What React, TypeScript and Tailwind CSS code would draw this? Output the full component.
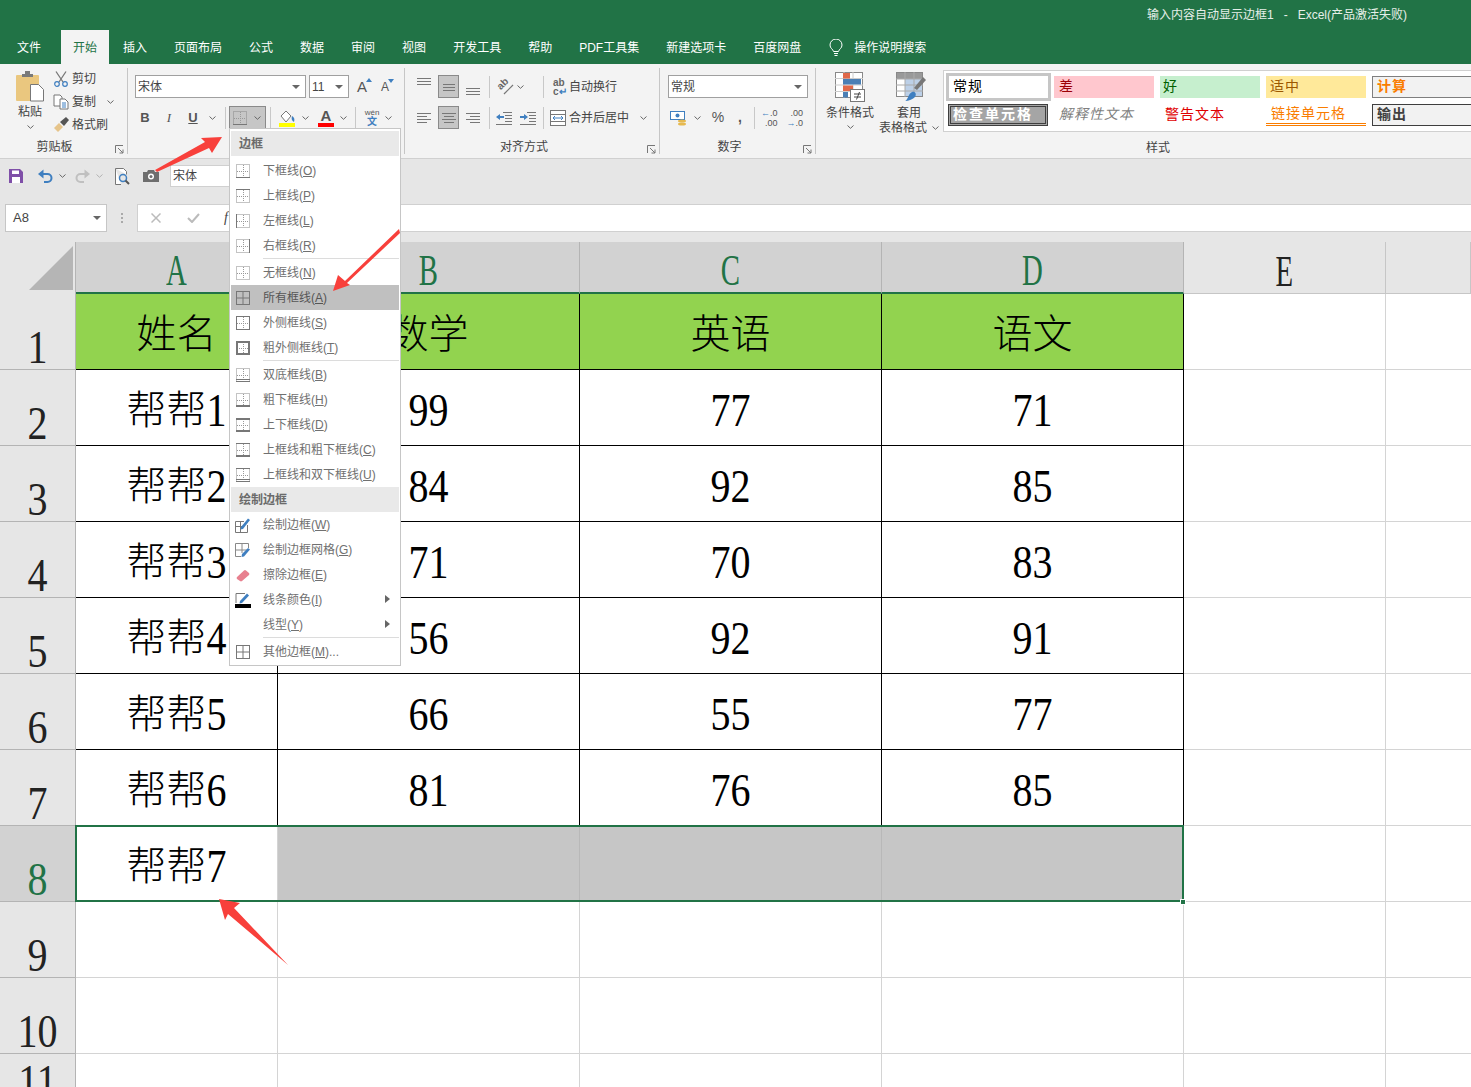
import type { ReactNode } from 'react';

function Chevron({ className = '' }: { className?: string }) {
  return (
    <svg width="7" height="4" viewBox="0 0 7 4" className={`shrink-0 ${className}`}>
      <path d="M0.5 0.5 3.5 3.3 6.5 0.5" fill="none" stroke="#666" strokeWidth="1" />
    </svg>
  );
}

function Caret() {
  return (
    <svg width="8" height="4" viewBox="0 0 8 4" className="shrink-0">
      <path d="M0 0h8L4 4z" fill="#666" />
    </svg>
  );
}

function Launcher() {
  return (
    <svg width="9" height="9" viewBox="0 0 9 9" className="shrink-0">
      <path d="M0.5 8V0.5H8M3 3l5 5M8 4.5V8H4.5" fill="none" stroke="#777" strokeWidth="1" />
    </svg>
  );
}

function Sep({ className = '' }: { className?: string }) {
  return <div className={`w-px h-[22px] bg-[#c8c8c8] shrink-0 ${className}`} />;
}

function Group({
  className,
  labelClass = '',
  label,
  children,
}: {
  className: string;
  labelClass?: string;
  label: string;
  children: ReactNode;
}) {
  return (
    <div className={`relative flex flex-col shrink-0 mt-1 h-[86px] border-r border-[#c6c6c6] ${className}`}>
      <div className="h-[72px]">{children}</div>
      <div className={`h-[14px] flex items-center justify-center text-xs leading-none text-[#444] ${labelClass}`}>{label}</div>
      <div className="absolute right-[3px] bottom-0">
        <Launcher />
      </div>
    </div>
  );
}

function AlignIcon({ lines }: { lines: [number, number, number][] }) {
  return (
    <svg width="16" height="16" viewBox="0 0 16 16">
      {lines.map(([x1, x2, y], i) => (
        <line key={i} x1={x1} x2={x2} y1={y + 0.5} y2={y + 0.5} stroke="#777" strokeWidth="1" />
      ))}
    </svg>
  );
}

type Edges = {
  t?: number;
  b?: number;
  l?: number;
  r?: number;
  inner?: boolean;
  dbl?: boolean;
};

function BorderIcon({ t, b, l, r, inner, dbl }: Edges) {
  const c = '#777';
  return (
    <svg width="14" height="14" viewBox="0 0 14 14" className="shrink-0">
      <rect x="0.5" y="0.5" width="13" height="13" fill="none" stroke="#888" strokeDasharray="1 1" />
      {inner ? (
        <path d="M7 0.5V13.5M0.5 7H13.5" fill="none" stroke={c} />
      ) : (
        <path d="M7.5 1V13M1 7.5H13" fill="none" stroke="#999" strokeDasharray="1 1" />
      )}
      {t && <line x1="0" x2="14" y1={t / 2} y2={t / 2} stroke={c} strokeWidth={t} />}
      {b && <line x1="0" x2="14" y1={14 - b / 2} y2={14 - b / 2} stroke={c} strokeWidth={b} />}
      {l && <line y1="0" y2="14" x1={l / 2} x2={l / 2} stroke={c} strokeWidth={l} />}
      {r && <line y1="0" y2="14" x1={14 - r / 2} x2={14 - r / 2} stroke={c} strokeWidth={r} />}
      {dbl && <line x1="0" x2="14" y1="11.5" y2="11.5" stroke={c} />}
    </svg>
  );
}

function DrawIcon() {
  return (
    <svg width="16" height="16" viewBox="0 0 16 16" className="shrink-0">
      <path d="M0.500 4.500H9M0.500 4.500V15.500H12.500V8M0.500 9.500H7M5.500 4.500V15.500" fill="none" stroke="#777" />
      <path d="M6 10 13 1.500l2 1.500L8 12 5.500 12.500z" fill="#3f7fc0" />
    </svg>
  );
}

function DrawGridIcon() {
  return (
    <svg width="16" height="16" viewBox="0 0 16 16" className="shrink-0">
      <path d="M0.500 14.500V1.500H13.500V6M0.500 14.500H6M0.500 8H13M7 1.500V11" fill="none" stroke="#888" />
      <path d="M7 12 13 6l2 1.500L9 14.500 6.500 15z" fill="#3f7fc0" />
    </svg>
  );
}

type MenuRow =
  | { kind: 'head'; label: string }
  | { kind: 'sep' }
  | { kind: 'item'; label: string; key2: string; tail?: string; icon?: ReactNode; active?: boolean; arrow?: boolean };

const menuRows: MenuRow[] = [
  { kind: 'head', label: '边框' },
  { kind: 'item', label: '下框线', key2: 'O', icon: <BorderIcon b={1} /> },
  { kind: 'item', label: '上框线', key2: 'P', icon: <BorderIcon t={1} /> },
  { kind: 'item', label: '左框线', key2: 'L', icon: <BorderIcon l={1} /> },
  { kind: 'item', label: '右框线', key2: 'R', icon: <BorderIcon r={1} /> },
  { kind: 'sep' },
  { kind: 'item', label: '无框线', key2: 'N', icon: <BorderIcon /> },
  { kind: 'item', label: '所有框线', key2: 'A', active: true, icon: <BorderIcon t={1} b={1} l={1} r={1} inner /> },
  { kind: 'item', label: '外侧框线', key2: 'S', icon: <BorderIcon t={1} b={1} l={1} r={1} /> },
  { kind: 'item', label: '粗外侧框线', key2: 'T', icon: <BorderIcon t={2} b={2} l={2} r={2} /> },
  { kind: 'sep' },
  { kind: 'item', label: '双底框线', key2: 'B', icon: <BorderIcon b={1} dbl /> },
  { kind: 'item', label: '粗下框线', key2: 'H', icon: <BorderIcon b={2} /> },
  { kind: 'item', label: '上下框线', key2: 'D', icon: <BorderIcon t={2} b={2} /> },
  { kind: 'item', label: '上框线和粗下框线', key2: 'C', icon: <BorderIcon t={1} b={2} /> },
  { kind: 'item', label: '上框线和双下框线', key2: 'U', icon: <BorderIcon t={1} b={1} dbl /> },
  { kind: 'head', label: '绘制边框' },
  { kind: 'item', label: '绘制边框', key2: 'W', icon: <DrawIcon /> },
  { kind: 'item', label: '绘制边框网格', key2: 'G', icon: <DrawGridIcon /> },
  {
    kind: 'item',
    label: '擦除边框',
    key2: 'E',
    icon: (
      <svg width="14" height="14" viewBox="0 0 14 14" className="shrink-0">
        <path d="M1 9 8 2.500q1-.8 2 0l3 2.500q.8 1 0 2L6 13q-1 .8-2 0L1 11q-.8-1 0-2z" fill="#e8808f" />
      </svg>
    ),
  },
  {
    kind: 'item',
    label: '线条颜色',
    key2: 'I',
    arrow: true,
    icon: (
      <svg width="16" height="16" viewBox="0 0 16 16" className="shrink-0">
        <path d="M1 11V1.500H10" fill="none" stroke="#777" />
        <path d="M5 9 12 1.500 14 3.500 7 11 4.500 11.500z" fill="#3f7fc0" />
        <rect x="0" y="12" width="16" height="4" fill="#000" />
      </svg>
    ),
  },
  { kind: 'item', label: '线型', key2: 'Y', arrow: true },
  { kind: 'sep' },
  { kind: 'item', label: '其他边框', key2: 'M', tail: '...', icon: <BorderIcon t={1} b={1} l={1} r={1} inner /> },
];

function BorderMenu() {
  return (
    <div className="absolute left-[229px] top-[128px] w-[172px] h-[538px] bg-white border border-[#c6c6c6] p-px pt-[2px] z-10">
      {menuRows.map((row, i) => {
        if (row.kind === 'head') {
          return (
            <div key={i} className={`h-[25px] bg-[#e9e9e9] flex items-center pl-2 text-xs font-bold text-[#6b6b6b] ${i === 0 ? 'mb-[2px]' : ''}`}>
              {row.label}
            </div>
          );
        }
        if (row.kind === 'sep') {
          return (
            <div key={i} className="h-[2px] pl-8">
              <div className="h-px bg-[#dcdcdc]" />
            </div>
          );
        }
        return (
          <div
            key={i}
            className={`relative h-[25px] flex items-center text-xs ${row.active ? 'bg-[#c0c0c0] text-[#555]' : 'text-[#707070]'}`}
          >
            <div className="w-[24px] flex justify-center shrink-0">{row.icon}</div>
            <span className="ml-2 whitespace-nowrap">
              {row.label}(<u>{row.key2}</u>){row.tail}
            </span>
            {row.arrow && (
              <svg width="5" height="8" viewBox="0 0 5 8" className="absolute right-[9px] top-[8px]">
                <path d="M0 0l5 4-5 4z" fill="#666" />
              </svg>
            )}
          </div>
        );
      })}
    </div>
  );
}

const tabs = ['插入', '页面布局', '公式', '数据', '审阅', '视图', '开发工具', '帮助', 'PDF工具集', '新建选项卡', '百度网盘'];

function TitleArea() {
  return (
    <div className="h-[64px] bg-[#217346] flex flex-col text-xs text-white">
      <div className="h-[30px] flex justify-end items-start pr-[64px] pt-[7px]">
        <span className="whitespace-pre text-[#e6efe9]">输入内容自动显示边框1   -   Excel(产品激活失败)</span>
      </div>
      <div className="h-[34px] flex items-stretch pl-1">
        <div className="px-[13px] pt-[2px] flex items-center">文件</div>
        <div className="ml-[7px] px-3 pt-[2px] bg-[#f3f3f3] text-[#217346] flex items-center">开始</div>
        <div className="flex items-stretch gap-px ml-px">
          {tabs.map((t) => (
            <div key={t} className="px-[13px] pt-[2px] flex items-center whitespace-nowrap">
              {t}
            </div>
          ))}
        </div>
        <div className="ml-[15px] pt-[2px] flex items-center">
          <svg width="14" height="18" viewBox="0 0 14 18">
            <path
              d="M4.500 12.500C4 10 1 9.500 1 6a6 6 0 0 1 12 0c0 3.500-3 4-3.500 6.500zM5 14.500h4M5.500 16.500h3"
              fill="none"
              stroke="#fff"
            />
          </svg>
          <span className="ml-[11px]">操作说明搜索</span>
        </div>
      </div>
    </div>
  );
}

function ClipboardGroup() {
  return (
    <Group className="w-[128px]" labelClass="pr-[18px]" label="剪贴板">
      <div className="flex text-xs text-[#444]">
        <div className="ml-[13px] w-[34px] flex flex-col items-center">
          <svg width="30" height="31" viewBox="0 0 30 31" className="mt-[3px]">
            <rect x="1" y="4" width="23" height="26" rx="1" fill="#eac77f" />
            <path d="M7 6V3h3V0h5v3h3v3z" fill="#7a7a7a" />
            <path d="M15.500 13.500h8l5 5v11.500h-13z" fill="#fff" stroke="#777" />
          </svg>
          <span className="mt-[2px] leading-4">粘贴</span>
          <Chevron className="mt-[5px]" />
        </div>
        <div className="ml-[6px] -mt-[1px] flex flex-col">
          <div className="h-[23px] flex items-center gap-[3px]">
            <svg width="16" height="16" viewBox="0 0 16 16">
              <path d="M3 0.500 10 11M13 0.500 6 11" fill="none" stroke="#777" strokeWidth="1.300" />
              <circle cx="4" cy="13" r="2.300" fill="none" stroke="#3f7fc0" strokeWidth="1.200" />
              <circle cx="12" cy="13" r="2.300" fill="none" stroke="#3f7fc0" strokeWidth="1.200" />
            </svg>
            <span>剪切</span>
          </div>
          <div className="h-[23px] flex items-center gap-[3px]">
            <svg width="16" height="16" viewBox="0 0 16 16">
              <path d="M1 1h6l2 2v9H1z" fill="#fff" stroke="#777" />
              <path d="M7 5h5l3 3v7H7z" fill="#fff" stroke="#777" />
              <path d="M9 9h4M9 11h4M9 13h4" stroke="#3f7fc0" />
            </svg>
            <span>复制</span>
            <Chevron className="ml-[8px]" />
          </div>
          <div className="h-[23px] flex items-center gap-[3px]">
            <svg width="16" height="16" viewBox="0 0 16 16">
              <path d="M1 11 6 6l4 4-5 5z" fill="#e6c48a" />
              <path d="M7 5 13 0l3 3-5 6z" fill="#555" />
            </svg>
            <span>格式刷</span>
          </div>
        </div>
      </div>
    </Group>
  );
}

function Select({ className, text }: { className: string; text: string }) {
  return (
    <div className={`h-[23px] bg-white border border-[#a0a0a0] flex items-center justify-between px-[2px] pr-[5px] text-xs text-[#444] shrink-0 ${className}`}>
      <span>{text}</span>
      <Caret />
    </div>
  );
}

function FontGroup() {
  return (
    <Group className="w-[277px]" label="">
      <div className="flex flex-col text-[#555]">
        <div className="flex items-center pl-[7px] mt-[7px]">
          <Select className="w-[171px]" text="宋体" />
          <Select className="w-[40px] ml-[3px]" text="11" />
          <div className="relative ml-[6px] w-[14px] text-center text-[15px] leading-none">
            A
            <svg width="6" height="4" viewBox="0 0 6 4" className="absolute -right-[3px] -top-[1px]">
              <path d="M3 0l3 4H0z" fill="#3f7fc0" />
            </svg>
          </div>
          <div className="relative ml-[10px] w-[12px] text-center text-[12px] leading-none">
            A
            <svg width="6" height="4" viewBox="0 0 6 4" className="absolute -right-[3px] -top-[2px]">
              <path d="M0 0h6L3 4z" fill="#3f7fc0" />
            </svg>
          </div>
        </div>
        <div className="flex items-center pl-[5px] mt-2 h-[23px]">
          <div className="w-[24px] text-center text-[13px] font-bold">B</div>
          <div className="w-[24px] text-center text-[13px] italic font-['Liberation_Serif',serif]">I</div>
          <div className="w-[24px] text-center text-[13px] font-bold underline">U</div>
          <div className="w-[14px] flex justify-center">
            <Chevron />
          </div>
          <Sep className="ml-[6px]" />
          <div className="ml-[3px] w-[37px] h-[23px] bg-[#c6c6c6] border border-[#8a8a8a] flex items-center pl-[3px] gap-[7px]">
            <BorderIcon b={1} />
            <Chevron />
          </div>
          <Sep className="ml-[4px]" />
          <svg width="18" height="18" viewBox="0 0 18 18" className="ml-[7px] shrink-0">
            <path d="M3 7 8 2l5 5-5 6z" fill="#fff" stroke="#777" />
            <path d="M14 7c2 1 3 3 2 6-2-1-3-3-2-6z" fill="#3f7fc0" />
            <rect x="1" y="14" width="16" height="4" fill="#ffff00" />
          </svg>
          <Chevron className="ml-[6px]" />
          <div className="ml-[9px] w-[16px] flex flex-col items-center">
            <span className="text-[15px] font-bold leading-[14px]">A</span>
            <div className="w-[16px] h-[4px] bg-[#ff0000]" />
          </div>
          <Chevron className="ml-[6px]" />
          <Sep className="ml-[8px]" />
          <div className="ml-[8px] w-[16px] flex flex-col items-center leading-none">
            <span className="text-[8px] leading-[9px]">wén</span>
            <span className="text-[10px] leading-[10px] text-[#3f7fc0] font-bold">文</span>
          </div>
          <Chevron className="ml-[5px]" />
        </div>
      </div>
    </Group>
  );
}

function AlignBtn({ active, children, className = '' }: { active?: boolean; children: ReactNode; className?: string }) {
  return (
    <div className={`w-[21px] h-[23px] flex items-center justify-center shrink-0 ${active ? 'bg-[#c6c6c6] border border-[#8a8a8a]' : ''} ${className}`}>
      {children}
    </div>
  );
}

function AlignGroup() {
  return (
    <Group className="w-[255px]" labelClass="pr-[16px]" label="对齐方式">
      <div className="flex flex-col text-xs text-[#444]">
        <div className="flex items-center pl-[8px] mt-[7px] h-[23px]">
          <AlignBtn>
            <div className="-mt-[10px]">
              <AlignIcon lines={[[1, 15, 4], [1, 15, 7], [1, 15, 10]]} />
            </div>
          </AlignBtn>
          <AlignBtn active className="ml-[4px]">
            <AlignIcon lines={[[2, 14, 5], [2, 14, 8], [2, 14, 11]]} />
          </AlignBtn>
          <AlignBtn className="ml-[3px]">
            <div className="mt-[6px]">
              <AlignIcon lines={[[1, 15, 6], [1, 15, 9], [1, 15, 12]]} />
            </div>
          </AlignBtn>
          <Sep className="ml-[6px]" />
          <div className="relative ml-[6px] w-[18px] h-[18px] shrink-0 text-[#666]">
            <span className="absolute left-[1px] top-[1px] text-[10px] leading-none font-bold -rotate-45">ab</span>
            <svg width="18" height="18" viewBox="0 0 18 18" className="absolute inset-0">
              <path d="M8 16l9-9" stroke="#777" strokeWidth="1.200" />
            </svg>
          </div>
          <Chevron className="ml-[3px]" />
          <Sep className="ml-[19px]" />
          <div className="ml-[9px] w-[13px] flex flex-col items-start leading-none font-bold text-[#666]">
            <span className="text-[10px] leading-[9px]">ab</span>
            <span className="text-[10px] leading-[9px]">c<span className="text-[#3f7fc0]">↵</span></span>
          </div>
          <span className="ml-[3px]">自动换行</span>
        </div>
        <div className="flex items-center pl-[8px] mt-2 h-[23px]">
          <AlignBtn>
            <AlignIcon lines={[[1, 15, 3], [1, 11, 6], [1, 15, 9], [1, 11, 12]]} />
          </AlignBtn>
          <AlignBtn active className="ml-[4px]">
            <AlignIcon lines={[[1, 15, 3], [3, 13, 6], [1, 15, 9], [3, 13, 12]]} />
          </AlignBtn>
          <AlignBtn className="ml-[3px]">
            <AlignIcon lines={[[1, 15, 3], [5, 15, 6], [1, 15, 9], [5, 15, 12]]} />
          </AlignBtn>
          <Sep className="ml-[6px]" />
          <svg width="16" height="14" viewBox="0 0 16 14" className="ml-[6px] shrink-0">
            <path d="M7 1.500h9M9 4.500h7M9 7.500h7M9 10.500h7M0 13.500h16" stroke="#777" />
            <path d="M0 6l4-3v2h4v2H4v2z" fill="#3f7fc0" />
          </svg>
          <svg width="16" height="14" viewBox="0 0 16 14" className="ml-2 shrink-0">
            <path d="M7 1.500h9M9 4.500h7M9 7.500h7M9 10.500h7M0 13.500h16" stroke="#777" />
            <path d="M8 6 4 3v2H0v2h4v2z" fill="#3f7fc0" />
          </svg>
          <Sep className="ml-[7px]" />
          <svg width="16" height="16" viewBox="0 0 16 16" className="ml-[6px] shrink-0">
            <rect x="0.500" y="0.500" width="15" height="15" fill="#fff" stroke="#777" />
            <path d="M0 4.500h16M0 11.500h16" stroke="#777" />
            <path d="M3 8h10M3 8l2-2M3 8l2 2M13 8l-2-2M13 8l-2 2" fill="none" stroke="#3f7fc0" />
          </svg>
          <span className="ml-[3px]">合并后居中</span>
          <Chevron className="ml-[11px]" />
        </div>
      </div>
    </Group>
  );
}

function NumberGroup() {
  return (
    <Group className="w-[156px]" labelClass="pr-[16px]" label="数字">
      <div className="flex flex-col text-xs text-[#555]">
        <div className="flex pl-2 mt-[7px]">
          <Select className="w-[140px]" text="常规" />
        </div>
        <div className="flex items-center pl-[10px] mt-2 h-[23px]">
          <svg width="18" height="16" viewBox="0 0 18 16" className="shrink-0">
            <rect x="0.500" y="1.500" width="14" height="8" fill="#fff" stroke="#3f7fc0" />
            <circle cx="7.500" cy="5.500" r="2" fill="#3f7fc0" />
            <ellipse cx="12" cy="11" rx="4" ry="1.500" fill="#e6b94f" />
            <ellipse cx="12" cy="14" rx="4" ry="1.500" fill="#e6b94f" />
          </svg>
          <Chevron className="ml-[6px]" />
          <span className="ml-[10px] w-[14px] text-center text-[14px]">%</span>
          <span className="ml-[12px] w-[6px] text-center text-[14px] font-bold">,</span>
          <Sep className="ml-[11px]" />
          <div className="ml-[6px] flex flex-col items-end leading-none text-[9px]">
            <span className="leading-[10px]"><span className="text-[#3f7fc0]">←</span>.0</span>
            <span className="leading-[10px]">.00</span>
          </div>
          <div className="ml-[9px] flex flex-col items-end leading-none text-[9px]">
            <span className="leading-[10px]">.00</span>
            <span className="leading-[10px]"><span className="text-[#3f7fc0]">→</span>.0</span>
          </div>
        </div>
      </div>
    </Group>
  );
}

function TableGroup() {
  return (
    <div className="w-[127px] shrink-0 flex text-xs text-[#444] pt-[8px] relative">
      <div className="ml-[10px] w-[48px] flex flex-col items-center">
        <svg width="30" height="30" viewBox="0 0 30 30">
          <rect x="0.500" y="0.500" width="27" height="25" fill="#fff" stroke="#888" />
          <path d="M9 0v26M18 0v26M0 6.500h28M0 13h28M0 19.500h28" stroke="#ccc" />
          <rect x="8" y="1" width="7" height="5.500" fill="#e0694a" />
          <rect x="8" y="7" width="18" height="5.500" fill="#4a7fb5" />
          <rect x="8" y="13.500" width="10" height="5.500" fill="#e0694a" />
          <rect x="8" y="20" width="5" height="5.500" fill="#4a7fb5" />
          <rect x="15.500" y="17.500" width="14" height="12" fill="#fff" stroke="#777" />
          <path d="M19 22h7M19 25h7M24.500 20l-3 7.500" fill="none" stroke="#444" />
        </svg>
        <span className="leading-[15px] mt-[4px]">条件格式</span>
        <Chevron className="mt-[4px]" />
      </div>
      <div className="ml-[5px] w-[48px] flex flex-col items-start">
        <svg width="30" height="30" viewBox="0 0 30 30" className="ml-[17px]">
          <rect x="0.500" y="0.500" width="26" height="24" fill="#fff" stroke="#888" />
          <rect x="1" y="1" width="25" height="6" fill="#999" />
          <rect x="9" y="7" width="17" height="17" fill="#bcd0e8" />
          <path d="M9 0v25M18 0v25M0 7h27M0 13h27M0 19h27" stroke="#aaa" />
          <path d="M18 16 27 5l3 3-9 10z" fill="#777" />
          <path d="M9 29c3-1 3-7 7-9 3-1 5 2 3 5-2 2-6 4-10 4z" fill="#3f7fc0" />
        </svg>
        <span className="leading-[15px] mt-[4px] ml-[18px]">套用</span>
        <span className="leading-[15px] whitespace-nowrap">表格格式</span>
      </div>
      <Chevron className="absolute left-[116px] top-[62px]" />
    </div>
  );
}

function StylesGroup() {
  return (
    <div className="flex-1 min-w-0 flex flex-col">
      <div className="mt-[6px] h-[62px] bg-white border border-[#d0d0d0] border-r-0 pt-[2px] flex flex-col overflow-hidden text-sm tracking-[1px] leading-none">
        <div className="flex items-center h-[28px] pl-[2px]">
          <div className="w-[105px] h-[28px] pb-[2px] border-[3px] border-[#c6c6c6] shrink-0 flex items-center pl-[4px] text-black outline outline-white -outline-offset-[4px]">常规</div>
          <div className="ml-[3px] w-[100px] h-[22px] pb-[2px] bg-[#ffc7ce] text-[#9c0006] shrink-0 flex items-center pl-[5px]">差</div>
          <div className="ml-[6px] w-[100px] h-[22px] pb-[2px] bg-[#c6efce] text-[#006100] shrink-0 flex items-center pl-[3px]">好</div>
          <div className="ml-[6px] w-[100px] h-[22px] pb-[2px] bg-[#ffe99a] text-[#9c5700] shrink-0 flex items-center pl-[4px]">适中</div>
          <div className="ml-[6px] w-[110px] h-[22px] pb-[2px] bg-[#f2f2f2] border border-[#7f7f7f] text-[#fa7d00] font-bold shrink-0 flex items-center pl-[4px]">计算</div>
        </div>
        <div className="flex items-center h-[24px] mt-[2px] pl-[4px]">
          <div className="w-[100px] h-[22px] pb-[2px] bg-[#a5a5a5] border-[3px] border-double border-[#3f3f3f] text-white font-bold shrink-0 flex items-center pl-[2px] tracking-[2px]">检查单元格</div>
          <div className="ml-[6px] w-[100px] h-[22px] pb-[2px] italic text-[#7f7f7f] shrink-0 flex items-center pl-[5px]">解释性文本</div>
          <div className="ml-[6px] w-[100px] h-[22px] pb-[2px] text-[#e00000] shrink-0 flex items-center pl-[5px]">警告文本</div>
          <div className="ml-[6px] w-[100px] h-[22px] pb-[2px] border-b-[3px] border-double border-[#fa7d00] text-[#fa7d00] shrink-0 flex items-center pl-[5px]">链接单元格</div>
          <div className="ml-[6px] w-[110px] h-[22px] pb-[2px] bg-[#f2f2f2] border border-[#3f3f3f] text-[#3f3f3f] font-bold shrink-0 flex items-center pl-[4px]">输出</div>
        </div>
      </div>
      <div className="mt-[8px] h-[16px] flex items-center justify-center text-xs leading-none text-[#444] pr-[98px]">样式</div>
    </div>
  );
}

function Ribbon() {
  return (
    <div className="h-[95px] bg-[#f3f3f3] border-b border-[#d0d0d0] flex">
      <ClipboardGroup />
      <FontGroup />
      <AlignGroup />
      <NumberGroup />
      <TableGroup />
      <StylesGroup />
    </div>
  );
}

function QuickBar() {
  return (
    <div className="h-[45px] flex items-start pt-[6px] pl-[9px]">
      <div className="h-[22px] flex items-center">
        <svg width="14" height="14" viewBox="0 0 14 14" className="shrink-0">
          <path d="M0 0h11l3 3v11H0z" fill="#7f4fa8" />
          <rect x="3" y="1.500" width="7" height="3.500" fill="#fff" />
          <rect x="3" y="8" width="8" height="6" fill="#fff" />
        </svg>
        <svg width="15" height="14" viewBox="0 0 15 14" className="ml-[15px] shrink-0">
          <path d="M2 5h7.500a4 4 0 0 1 0 8H6" fill="none" stroke="#3f7fc0" strokeWidth="2" />
          <path d="M5.500 0.500v9L0 5z" fill="#3f7fc0" />
        </svg>
        <Chevron className="ml-[6px]" />
        <svg width="15" height="14" viewBox="0 0 15 14" className="ml-[9px] shrink-0">
          <path d="M13 5H5.500a4 4 0 0 0 0 8H9" fill="none" stroke="#c0c0c0" strokeWidth="2" />
          <path d="M9.500 0.500v9L15 5z" fill="#c0c0c0" />
        </svg>
        <Chevron className="ml-[6px] opacity-40" />
        <svg width="15" height="17" viewBox="0 0 15 17" className="ml-[12px] shrink-0">
          <path d="M0.500 0.500h8l3 3v3M6 16.500H0.500v-16" fill="#fff" stroke="#777" />
          <circle cx="8" cy="10" r="3.500" fill="none" stroke="#3f7fc0" strokeWidth="1.500" />
          <path d="M10.500 12.500 14 16" stroke="#555" strokeWidth="2" />
        </svg>
        <svg width="16" height="12" viewBox="0 0 16 12" className="ml-[13px] shrink-0">
          <path d="M0 2h4l1-2h6l1 2h4v10H0z" fill="#6e6e6e" />
          <circle cx="8" cy="6.500" r="3" fill="#fff" />
          <circle cx="8" cy="6.500" r="1.500" fill="#6e6e6e" />
        </svg>
        <div className="ml-[11px] w-[80px] h-[22px] bg-white border border-[#d0d0d0] text-xs text-[#444] flex items-center pl-[2px]">宋体</div>
      </div>
    </div>
  );
}

function FormulaBar() {
  return (
    <div className="h-[28px] flex items-stretch pl-[5px] text-[#444]">
      <div className="w-[102px] bg-white border border-[#c6c6c6] flex items-center justify-between pl-[7px] pr-[5px] text-[13px]">
        <span>A8</span>
        <Caret />
      </div>
      <div className="w-[30px] flex items-center justify-center">
        <div className="flex flex-col gap-[2px]">
          <div className="w-[2px] h-[2px] bg-[#aaa]" />
          <div className="w-[2px] h-[2px] bg-[#aaa]" />
          <div className="w-[2px] h-[2px] bg-[#aaa]" />
        </div>
      </div>
      <div className="flex-1 bg-white border border-[#d0d0d0] border-r-0 flex items-center pl-[13px]">
        <svg width="10" height="10" viewBox="0 0 10 10">
          <path d="M0.500 0.500l9 9M9.500 0.500l-9 9" stroke="#bbb" strokeWidth="1.500" />
        </svg>
        <svg width="13" height="10" viewBox="0 0 13 10" className="ml-[26px]">
          <path d="M1 5l4 4 7-8" fill="none" stroke="#bbb" strokeWidth="2" />
        </svg>
        <span className="ml-[24px] italic text-sm font-['Liberation_Serif',serif]">f</span>
      </div>
    </div>
  );
}

// digits and latin letters in the sheet are tall and narrow, so stretch them a little
function Tall({ children }: { children: ReactNode }) {
  return <span className="inline-block scale-y-[1.18]">{children}</span>;
}

const sheetFont = "font-['Liberation_Serif','Noto_Sans_CJK_SC',serif]";

const head = ['A', 'B', 'C', 'D', 'E', ''];

const rows: [string, string, string, string][] = [
  ['姓名', '数学', '英语', '语文'],
  ['帮帮1', '99', '77', '71'],
  ['帮帮2', '84', '92', '85'],
  ['帮帮3', '71', '70', '83'],
  ['帮帮4', '56', '92', '91'],
  ['帮帮5', '66', '55', '77'],
  ['帮帮6', '81', '76', '85'],
  ['帮帮7', '', '', ''],
];

function CellText({ text }: { text: string }) {
  const m = text.match(/^(\D*)(\d*)$/);
  const cjk = m ? m[1] : text;
  const num = m ? m[2] : '';
  return (
    <span className="font-light whitespace-nowrap">
      {cjk}
      {num && <Tall>{num}</Tall>}
    </span>
  );
}

function RowHead({ n, selected, className = 'h-[76px]' }: { n: number; selected?: boolean; className?: string }) {
  return (
    <div
      className={`w-[76px] shrink-0 border-r border-b border-[#b4b4b4] flex items-end justify-center pb-[2px] text-[40px] leading-[38px] font-light ${className} ${selected ? 'bg-[#d2d2d2] text-[#217346]' : 'bg-[#e6e6e6] text-[#222]'}`}
    >
      <Tall>{n}</Tall>
    </div>
  );
}

function Sheet() {
  return (
    <div className={`relative ${sheetFont}`}>
      {/* column headers */}
      <div className="flex h-[52px]">
        <div className="w-[76px] shrink-0 bg-[#e6e6e6] border-r border-[#b4b4b4] relative">
          <div className="absolute right-[2px] top-[4px] w-[44px] h-[44px] bg-[#b5b5b5] [clip-path:polygon(100%_0,100%_100%,0_100%)]" />
        </div>
        {head.map((h, i) => {
          const on = i < 4;
          const w = i === 0 || i === 4 ? 'w-[202px]' : i === 5 ? 'flex-1' : 'w-[302px]';
          return (
            <div
              key={i}
              className={`${w} flex items-center justify-center pt-[2px] text-[40px] border-r ${on ? 'bg-[#d2d2d2] border-[#b4b4b4] border-b-2 border-b-[#217346] text-[#217346]' : 'bg-[#e6e6e6] border-[#c6c6c6] border-b border-b-[#c6c6c6] text-[#222]'}`}
            >
              {h && <span className="inline-block scale-x-[0.72] scale-y-[1.12] leading-none font-light pt-1">{h}</span>}
            </div>
          );
        })}
      </div>
      {/* data rows */}
      {[...Array(11)].map((_, r) => {
        const cells = rows[r];
        const data = r < 7;
        const selected = r === 7;
        const line = data ? 'border-black' : 'border-[#d4d4d4]';
        const h = r === 10 ? 'h-[50px]' : 'h-[76px]';
        return (
          <div key={r} className="flex text-[40px] text-black leading-none">
            <RowHead n={r + 1} selected={selected} className={h} />
            {[0, 1, 2, 3].map((c) => {
              const w = c === 0 ? 'w-[202px]' : 'w-[302px]';
              const fill = r === 0 ? 'bg-[#92d34f]' : selected && c > 0 ? 'bg-[#c6c6c6]' : 'bg-white';
              const br = selected && c > 0 ? 'border-[#b8b8b8]' : line;
              return (
                <div key={c} className={`${w} ${h} ${fill} ${br} border-r border-b flex items-center justify-center pt-[7px]`}>
                  {cells && cells[c] && <CellText text={cells[c]} />}
                </div>
              );
            })}
            <div className={`w-[202px] ${h} bg-white border-r border-b border-[#d4d4d4]`} />
            <div className={`flex-1 ${h} bg-white border-b border-[#d4d4d4]`} />
          </div>
        );
      })}
      {/* selection frame on row 8 */}
      <div className="absolute left-[75px] top-[583px] w-[1109px] h-[77px] border-2 border-[#217346] pointer-events-none" />
      <div className="absolute left-[1180px] top-[657px] w-[6px] h-[6px] bg-[#217346] border border-white" />
    </div>
  );
}

function Arrows() {
  return (
    <svg width="1471" height="1087" viewBox="0 0 1471 1087" className="absolute inset-0 z-20 pointer-events-none">
      <polygon points="155,170 205,142 201,138 222,137 212,153 209,148 157,172" fill="#f8403b" />
      <polygon points="399,229 345,281 338,275 333,291 350,285 347,283 400,233" fill="#f8403b" />
      <polygon points="219,899 240,903 234,908 288,965 228,914 225,920" fill="#f8403b" />
    </svg>
  );
}

export default function App() {
  return (
    <div className="relative w-[1471px] h-[1087px] overflow-hidden bg-[#e6e6e6] font-['Liberation_Sans','Noto_Sans_CJK_SC',sans-serif]">
      <TitleArea />
      <Ribbon />
      <QuickBar />
      <FormulaBar />
      <div className="h-[10px]" />
      <Sheet />
      <BorderMenu />
      <Arrows />
    </div>
  );
}
